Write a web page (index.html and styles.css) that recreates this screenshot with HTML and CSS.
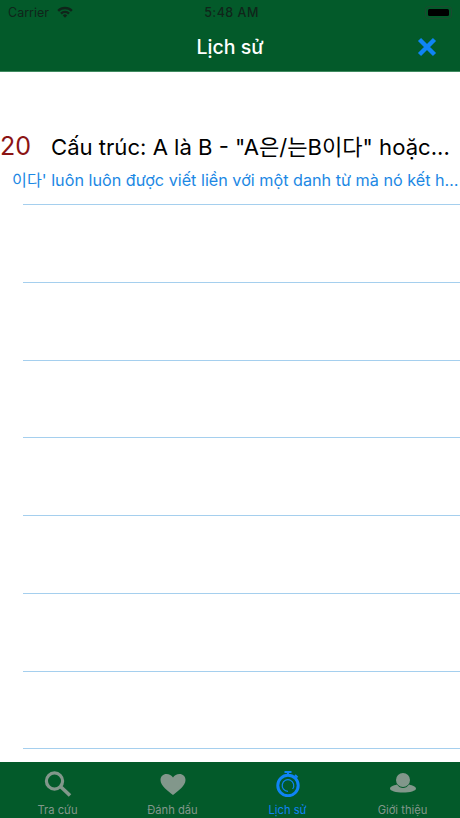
FILE: index.html
```html
<!DOCTYPE html>
<html lang="vi">
<head>
  <meta charset="UTF-8" />
  <meta name="viewport" content="width=device-width, initial-scale=1.0"/>
  <title>Lịch sử</title>
  <link rel="stylesheet" href="styles.css">
</head>
<body>
<div class="screen">
  <header class="topbar">
    <div class="status">
      <div class="status-left">
        <span>Carrier</span>
        <svg class="wifi" width="16" height="12" viewBox="0 0 16 12">
          <path d="M0.3 3.9 A11 11 0 0 1 15.7 3.9 L14 5.7 A8.6 8.6 0 0 0 2 5.7 Z" fill="#10251a"/>
          <path d="M3.1 6.7 A7 7 0 0 1 12.9 6.7 L11.2 8.4 A4.7 4.7 0 0 0 4.8 8.4 Z" fill="#10251a"/>
          <path d="M5.8 9.4 A3.2 3.2 0 0 1 10.2 9.4 L8 11.7 Z" fill="#10251a"/>
        </svg>
      </div>
      <div class="status-time">5:48 AM</div>
      <div class="status-right">
        <div class="battery"><div class="battery-fill"></div></div>
      </div>
    </div>
    <div class="navbar">
      <h1>Lịch sử</h1>
      <svg class="close" width="20" height="20" viewBox="0 0 20 20">
        <path d="M2.5 2.5 L17.5 17.5 M17.5 2.5 L2.5 17.5" stroke="#0f84f5" stroke-width="4.4" fill="none"/>
      </svg>
    </div>
  </header>

  <main class="list">
    <div class="row row-first">
      <div class="row-title"><span class="num">20</span><span class="title">Cấu trúc: A là B - "A은/는B이다" hoặc...</span></div>
      <div class="row-sub">이다' luôn luôn được viết liền với một danh từ mà nó kết h…</div>
    </div>
    <div class="row"></div>
    <div class="row"></div>
    <div class="row"></div>
    <div class="row"></div>
    <div class="row"></div>
    <div class="row"></div>
    <div class="row"></div>
  </main>

  <nav class="tabbar">
    <div class="tab">
      <svg width="28" height="26" viewBox="0 0 28 26">
        <circle cx="10.5" cy="10" r="8.1" fill="none" stroke="#82978b" stroke-width="3.2"/>
        <path d="M17 16 L26 24.5" stroke="#82978b" stroke-width="3.6" fill="none"/>
      </svg>
      <span>Tra cứu</span>
    </div>
    <div class="tab">
      <svg width="28" height="26" viewBox="0 0 28 26">
        <path d="M14 24 C9 20 1.5 15 1.5 9 C1.5 5.5 4 3 7.5 3 C10.3 3 12.6 4.4 14 6.6 C15.4 4.4 17.7 3 20.5 3 C24 3 26.5 5.5 26.5 9 C26.5 15 19 20 14 24 Z" fill="#82978b"/>
      </svg>
      <span>Đánh dấu</span>
    </div>
    <div class="tab active">
      <svg width="28" height="26" viewBox="0 0 28 26">
        <path d="M10.5 1 H17.5 M14 1 V4 M21 4 L23.5 6.5" stroke="#0f84f5" stroke-width="2" fill="none"/>
        <circle cx="14" cy="14.5" r="10.2" fill="none" stroke="#0f84f5" stroke-width="3"/>
        <path d="M18.6 18 A5.8 5.8 0 1 0 14 20.3" fill="none" stroke="#0f84f5" stroke-width="1.2"/>
      </svg>
      <span>Lịch sử</span>
    </div>
    <div class="tab">
      <svg width="28" height="26" viewBox="0 0 28 26">
        <circle cx="14" cy="9" r="7" fill="#82978b"/>
        <path d="M8 13.5 C4 14.5 1 15.8 1 17.5 C1 20 7 21.5 14 21.5 C21 21.5 27 20 27 17.5 C27 15.8 24 14.5 20 13.5 C18.5 16 16 17 14 17 C12 17 9.5 16 8 13.5 Z" fill="#82978b"/>
      </svg>
      <span>Giới thiệu</span>
    </div>
  </nav>
</div>
</body>
</html>
```

FILE: styles.css
```css
body {
  margin: 0;
  background-color: #fff;
  font-family: Inter, "Noto Sans CJK KR", sans-serif;
}

.screen {
  width: 460px;
  height: 818px;
  display: flex;
  flex-direction: column;
  overflow: hidden;
}

.topbar {
  background-color: #035a2a;
  height: 72px;
  border-bottom: 1px solid #3f8a60;
  box-sizing: border-box;
  flex-shrink: 0;
}

.status {
  height: 24px;
  display: grid;
  grid-template-columns: 1fr auto 1fr;
  align-items: center;
  padding: 0 8px;
  font-size: 12.5px;
  color: #10251a;
}

.status-left {
  display: flex;
  align-items: center;
  gap: 8px;
}

.status-time {
  font-weight: 500;
  letter-spacing: 0.5px;
  padding-left: 3px;
}

.status-right {
  display: flex;
  justify-content: flex-end;
}

.battery {
  width: 27px;
  height: 13px;
  padding: 2px;
  box-sizing: border-box;
  border: 1px solid #1c4a30;
  border-radius: 4px;
}

.battery-fill {
  height: 7px;
  background-color: #000;
  border-radius: 1.5px;
}

.navbar {
  position: relative;
  height: 46px;
  display: flex;
  align-items: center;
  justify-content: center;
}

.navbar h1 {
  margin: 0;
  font-size: 19.5px;
  font-weight: 500;
  color: #fff;
}

.close {
  position: absolute;
  right: 23px;
  top: 13px;
}

.list {
  flex: 1;
  min-height: 0;
  padding-top: 55px;
  box-sizing: border-box;
}

.row {
  height: 77.75px;
  margin-left: 23px;
  box-sizing: border-box;
  border-bottom: 1px solid #a5cfee;
}

.row-first {
  margin-left: 0;
  height: 78px;
  border-bottom: none;
  position: relative;
}

.row-first::after {
  content: "";
  position: absolute;
  left: 23px;
  right: 0;
  bottom: 0;
  border-bottom: 1px solid #a5cfee;
}

.row-title {
  display: flex;
  align-items: baseline;
  white-space: nowrap;
  height: 40px;
  padding-top: 2px;
  box-sizing: border-box;
}

.num {
  width: 51px;
  font-size: 25px;
  color: #8b1414;
}

.title {
  font-size: 22.1px;
  color: #000;
}

.row-sub {
  padding-left: 12px;
  font-size: 16.2px;
  color: #1c88e4;
  white-space: nowrap;
}

.tabbar {
  height: 56px;
  background-color: #035a2a;
  display: flex;
  flex-shrink: 0;
}

.tab {
  flex: 1;
  display: flex;
  flex-direction: column;
  align-items: center;
  padding-top: 9px;
  font-size: 11.2px;
  color: #82978b;
}

.tab svg {
  display: block;
  margin-bottom: 6px;
}

.tab.active {
  color: #0f84f5;
}
```
